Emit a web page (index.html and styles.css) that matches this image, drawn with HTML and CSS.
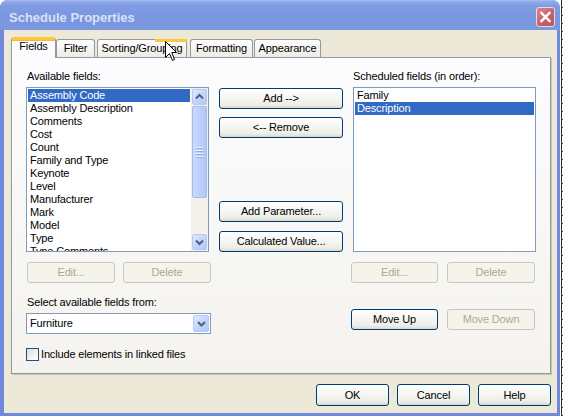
FILE: index.html
```html
<!DOCTYPE html>
<html>
<head>
<meta charset="utf-8">
<title>Schedule Properties</title>
<link rel="stylesheet" href="styles.css">
</head>
<body>
<div class="window">
  <div class="titlebar">
    <span class="title">Schedule Properties</span>
    <span class="close"><svg width="17" height="18" viewBox="0 0 17 18"><path d="M4.5 5 L12.5 13 M12.5 5 L4.5 13" stroke="#fff" stroke-width="2.4" stroke-linecap="square"/></svg></span>
  </div>
  <div class="client">
    <div class="tabs">
      <div class="tab active t-fields">Fields</div>
      <div class="tab t-filter">Filter</div>
      <div class="tab hot t-sort">Sorting/Grouping</div>
      <div class="tab t-format">Formatting</div>
      <div class="tab t-appear">Appearance</div>
    </div>
    <div class="panel">
      <div class="col col-left">
        <div class="label">Available fields:</div>
        <div class="listbox">
          <div class="items">
            <div class="item sel">Assembly Code</div>
            <div class="item">Assembly Description</div>
            <div class="item">Comments</div>
            <div class="item">Cost</div>
            <div class="item">Count</div>
            <div class="item">Family and Type</div>
            <div class="item">Keynote</div>
            <div class="item">Level</div>
            <div class="item">Manufacturer</div>
            <div class="item">Mark</div>
            <div class="item">Model</div>
            <div class="item">Type</div>
            <div class="item">Type Comments</div>
          </div>
          <div class="sb">
            <div class="sb-btn sb-up"><svg width="13" height="14" viewBox="0 0 13 14"><polyline points="3,8.5 6.5,5 10,8.5" fill="none" stroke="#4d6185" stroke-width="2"/></svg></div>
            <div class="sb-thumb"><span class="grip"></span><span class="grip"></span><span class="grip"></span><span class="grip"></span></div>
            <div class="sb-track"></div>
            <div class="sb-btn sb-down"><svg width="13" height="14" viewBox="0 0 13 14"><polyline points="3,5.5 6.5,9 10,5.5" fill="none" stroke="#4d6185" stroke-width="2"/></svg></div>
          </div>
        </div>
        <div class="btnrow btnrow-left">
          <div class="btn dis w88">Edit...</div>
          <div class="btn dis w88">Delete</div>
        </div>
        <div class="label label-select">Select available fields from:</div>
        <div class="combo">
          <span class="combo-text">Furniture</span>
          <span class="dd"><svg width="13" height="15" viewBox="0 0 13 15"><polyline points="3,6 6.5,9.5 10,6" fill="none" stroke="#4d6185" stroke-width="2"/></svg></span>
        </div>
        <div class="check"><span class="box"></span><span>Include elements in linked files</span></div>
      </div>
      <div class="col col-mid">
        <div class="btn">Add --&gt;</div>
        <div class="btn m8">&lt;-- Remove</div>
        <div class="btn m-param">Add Parameter...</div>
        <div class="btn m9">Calculated Value...</div>
      </div>
      <div class="col col-right">
        <div class="label label-right">Scheduled fields (in order):</div>
        <div class="listbox listbox-right">
          <div class="items">
            <div class="item">Family</div>
            <div class="item sel">Description</div>
          </div>
        </div>
        <div class="btnrow">
          <div class="btn dis w87">Edit...</div>
          <div class="btn dis w88">Delete</div>
        </div>
        <div class="btnrow btnrow-move">
          <div class="btn w87">Move Up</div>
          <div class="btn dis w88">Move Down</div>
        </div>
      </div>
    </div>
    <div class="footer">
      <div class="btn fbtn">OK</div>
      <div class="btn fbtn">Cancel</div>
      <div class="btn fbtn">Help</div>
    </div>
  </div>
</div>
<div class="strip"></div>
<svg class="cursor" width="13" height="21" viewBox="0 0 13 21"><polygon points="0.5,0.5 0.5,16.5 4.5,12.5 7.5,19.5 9.5,18.5 6.8,11.5 11.5,11.5" fill="#fff" stroke="#000" stroke-width="1"/></svg>
</body>
</html>
```

FILE: styles.css
```css
html, body {
  margin: 0;
  padding: 0;
}
body {
  width: 563px;
  height: 416px;
  overflow: hidden;
  display: flex;
  background: #fff;
  font-family: "Liberation Sans", Arial, sans-serif;
  font-size: 11px;
  letter-spacing: -0.15px;
  color: #000;
  position: relative;
}
.window {
  width: 560px;
  height: 416px;
  box-sizing: border-box;
  background: #7089dc;
  border-radius: 8px 8px 0 0;
  display: flex;
  flex-direction: column;
  flex: none;
}
.titlebar {
  height: 30px;
  flex: none;
  display: flex;
  justify-content: space-between;
  align-items: flex-start;
  padding: 0 5px 0 9px;
  border-radius: 8px 8px 0 0;
  background: linear-gradient(#a8bdf1 0px, #8ea8ea 2px, #7f9be2 6px, #7a96df 20px, #7b97e0 30px);
}
.title {
  margin-top: 10px;
  line-height: 15px;
  font-size: 13px;
  font-weight: bold;
  letter-spacing: 0;
  color: #d8e2f7;
}
.close {
  margin-top: 7px;
  width: 19px;
  height: 20px;
  box-sizing: border-box;
  border: 1px solid #ead6dc;
  border-radius: 3px;
  background: linear-gradient(135deg, #d38a93, #c2606d 60%, #b45563);
  display: flex;
  align-items: center;
  justify-content: center;
}
.client {
  flex: 1;
  margin: 0 3px 3px 4px;
  background: #ece9d8;
  display: flex;
  flex-direction: column;
  padding: 7px 6px 0 7px;
}
.tabs {
  height: 20px;
  display: flex;
  align-items: flex-end;
  flex: none;
}
.tab {
  box-sizing: border-box;
  height: 18px;
  border: 1px solid #919b9c;
  border-bottom: none;
  border-radius: 3px 3px 0 0;
  background: linear-gradient(#fefefe, #f4f3ee 60%, #ecebe5);
  text-align: center;
  padding-top: 2px;
  line-height: 13px;
  white-space: nowrap;
  position: relative;
}
.tab.active {
  height: 21px;
  margin-bottom: -1px;
  background: #fcfcfe;
  border-top: 3px solid #ffc83c;
  box-shadow: inset 0 1px 0 #f5b644;
  padding-top: 0;
  z-index: 1;
}
.tab.hot::before {
  content: "";
  position: absolute;
  top: -1px;
  right: -1px;
  width: 32px;
  height: 3px;
  background: #ffc83c;
}
.t-fields { width: 45px; }
.t-filter { width: 39px; }
.t-sort { width: 90px; margin-left: 2px; }
.t-format { width: 63px; margin-left: 3px; }
.t-appear { width: 67px; margin-left: 1px; }

.panel {
  height: 317px;
  box-sizing: border-box;
  flex: none;
  border: 1px solid #919b9c;
  background: linear-gradient(#fcfcfe, #f4f3ee);
  box-shadow: 1px 1px 0 #c9c6b6;
  display: grid;
  grid-template-columns: 185px 124px 186px;
  column-gap: 8px;
  padding: 12px 0 0 14px;
  align-items: start;
}
.col {
  display: flex;
  flex-direction: column;
}
.label {
  height: 13px;
  line-height: 13px;
  padding-left: 1px;
  margin-bottom: 4px;
  white-space: nowrap;
}
.label-right {
  padding-left: 2px;
}
.label-select {
  margin-top: 13px;
}
.listbox {
  box-sizing: border-box;
  width: 183px;
  height: 165px;
  border: 1px solid #7f9db9;
  background: #fff;
  display: flex;
  overflow: hidden;
}
.listbox-right {
  margin-left: 2px;
}
.items {
  flex: 1;
  padding: 1px;
  overflow: hidden;
}
.item {
  height: 13px;
  line-height: 13px;
  padding-left: 2px;
  white-space: nowrap;
}
.item.sel {
  background: #316ac5;
  color: #fff;
}
.sb {
  width: 17px;
  flex: none;
  display: flex;
  flex-direction: column;
  align-items: center;
  background: #f3f1ec;
}
.sb-btn {
  box-sizing: border-box;
  width: 15px;
  height: 16px;
  flex: none;
  border: 1px solid #b7c8f0;
  border-radius: 2px;
  background: linear-gradient(135deg, #e3ebfe, #c4d5fc 50%, #b4c8f6);
  display: flex;
  align-items: center;
  justify-content: center;
}
.sb-up { margin-top: 1px; }
.sb-down { margin-bottom: 1px; }
.sb-thumb {
  box-sizing: border-box;
  width: 15px;
  height: 92px;
  margin-top: 1px;
  flex: none;
  border: 1px solid #a5b9ee;
  border-radius: 2px;
  background: linear-gradient(to right, #cad9fd, #bccffb 60%, #b2c7f8);
  display: flex;
  flex-direction: column;
  align-items: center;
  justify-content: center;
  gap: 1px;
}
.grip {
  width: 7px;
  height: 1px;
  background: #eef3fe;
  box-shadow: 0 1px 0 #8faaee;
  margin-bottom: 1px;
}
.sb-track {
  flex: 1;
}
.btnrow {
  display: flex;
  gap: 9px;
  margin-top: 10px;
}
.btnrow-left {
  gap: 8px;
  padding-left: 1px;
}
.btnrow-move {
  margin-top: 26px;
}
.btn {
  box-sizing: border-box;
  height: 21px;
  border: 1px solid #003c74;
  border-radius: 3px;
  background: linear-gradient(#ffffff 0%, #f7f7f4 40%, #efeee8 80%, #e3e1d8 94%, #d6d0c5 100%);
  display: flex;
  align-items: center;
  justify-content: center;
  white-space: nowrap;
  line-height: 13px;
  flex: none;
}
.btn.dis {
  border-color: #c9c7ba;
  color: #aca899;
  background: #f5f4ea;
}
.w87 { width: 87px; }
.w88 { width: 88px; }
.col-mid {
  padding-top: 18px;
}
.col-mid .btn {
  width: 124px;
}
.m8 { margin-top: 8px; }
.m9 { margin-top: 9px; }
.m-param { margin-top: 63px; }
.combo {
  box-sizing: border-box;
  width: 185px;
  height: 21px;
  border: 1px solid #7f9db9;
  background: #fff;
  display: flex;
  align-items: center;
  justify-content: space-between;
}
.combo-text {
  padding-left: 3px;
  line-height: 13px;
}
.dd {
  box-sizing: border-box;
  width: 16px;
  height: 17px;
  margin-right: 1px;
  border: 1px solid #b7c8f0;
  border-radius: 2px;
  background: linear-gradient(135deg, #e3ebfe, #c4d5fc 50%, #b4c8f6);
  display: flex;
  align-items: center;
  justify-content: center;
}
.check {
  margin-top: 14px;
  display: flex;
  align-items: center;
  gap: 2px;
  height: 13px;
  line-height: 13px;
  white-space: nowrap;
}
.box {
  box-sizing: border-box;
  width: 13px;
  height: 13px;
  border: 1px solid #1c5180;
  background: linear-gradient(135deg, #dcdcd7, #f6f6f3 70%, #fff);
}
.footer {
  display: flex;
  justify-content: flex-end;
  gap: 8px;
  padding-top: 10px;
}
.fbtn {
  width: 73px;
  height: 22px;
}
.strip {
  width: 3px;
  height: 416px;
  flex: none;
  background:
    linear-gradient(to right, #fff 0 1px, #2a2a2a 1px 2px, transparent 2px),
    repeating-linear-gradient(#fff 0 7px, #555 7px 8px);
}
.cursor {
  position: absolute;
  left: 165px;
  top: 41px;
}
```
